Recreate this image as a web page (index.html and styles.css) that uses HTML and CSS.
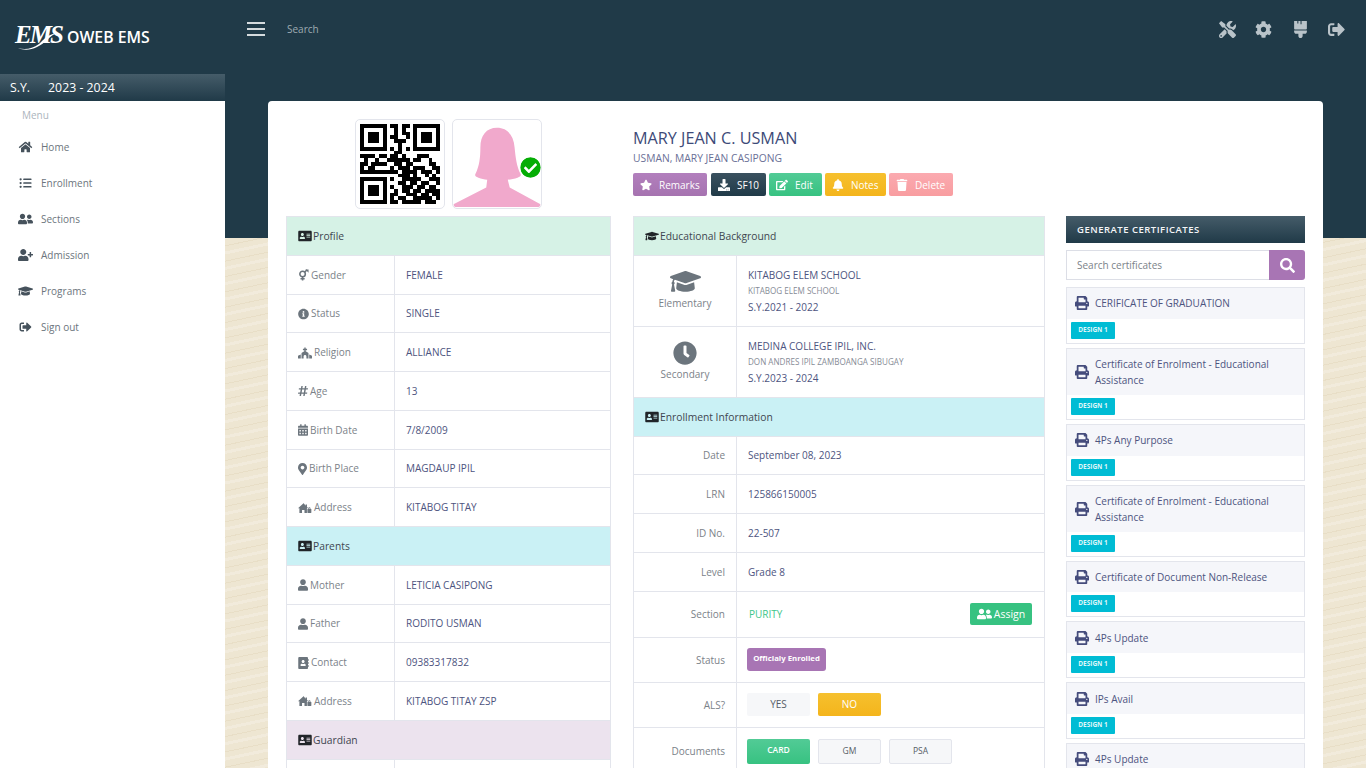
FILE: index.html
```html
<!DOCTYPE html>
<html lang="en">
<head>
  <meta charset="UTF-8">
  <meta name="viewport" content="width=device-width, initial-scale=1.0">
  <title>OWEB EMS</title>
  <link rel="stylesheet" href="styles.css">
</head>
<body>
  <svg class="sprite" xmlns="http://www.w3.org/2000/svg">
    <symbol id="i-home" viewBox="0 0 576 512"><path d="M280.37 148.26L96 300.11V464a16 16 0 0 0 16 16l112.06-.29a16 16 0 0 0 15.92-16V368a16 16 0 0 1 16-16h64a16 16 0 0 1 16 16v95.64a16 16 0 0 0 16 16.05L464 480a16 16 0 0 0 16-16V300L295.67 148.26a12.19 12.19 0 0 0-15.3 0zM571.6 251.47L488 182.56V44.05a12 12 0 0 0-12-12h-56a12 12 0 0 0-12 12v72.61L318.47 43a48 48 0 0 0-61 0L4.34 251.47a12 12 0 0 0-1.6 16.9l25.5 31A12 12 0 0 0 45.15 301l235.22-193.74a12.19 12.19 0 0 1 15.3 0L530.9 301a12 12 0 0 0 16.9-1.6l25.5-31a12 12 0 0 0-1.7-16.93z"/></symbol>
    <symbol id="i-list" viewBox="0 0 512 512"><path d="M48 48a48 48 0 1 0 48 48 48 48 0 0 0-48-48zm0 160a48 48 0 1 0 48 48 48 48 0 0 0-48-48zm0 160a48 48 0 1 0 48 48 48 48 0 0 0-48-48zm448 16H176a16 16 0 0 0-16 16v32a16 16 0 0 0 16 16h320a16 16 0 0 0 16-16v-32a16 16 0 0 0-16-16zm0-320H176a16 16 0 0 0-16 16v32a16 16 0 0 0 16 16h320a16 16 0 0 0 16-16V80a16 16 0 0 0-16-16zm0 160H176a16 16 0 0 0-16 16v32a16 16 0 0 0 16 16h320a16 16 0 0 0 16-16v-32a16 16 0 0 0-16-16z"/></symbol>
    <symbol id="i-friends" viewBox="0 0 640 512"><path d="M192 256c61.9 0 112-50.1 112-112S253.9 32 192 32 80 82.1 80 144s50.1 112 112 112zm76.8 32h-8.3c-20.8 10-43.9 16-68.5 16s-47.6-6-68.5-16h-8.3C51.6 288 0 339.6 0 403.2V432c0 26.5 21.5 48 48 48h288c26.5 0 48-21.5 48-48v-28.8c0-63.6-51.6-115.2-115.2-115.2zM480 256c53 0 96-43 96-96s-43-96-96-96-96 43-96 96 43 96 96 96zm48 32h-3.8c-13.9 4.8-28.6 8-44.2 8s-30.3-3.2-44.2-8H432c-20.4 0-39.2 5.9-55.7 15.4 24.4 26.3 39.7 61.2 39.7 99.8v38.4c0 2.2-.5 4.3-.6 6.4H592c26.5 0 48-21.5 48-48 0-61.9-50.1-112-112-112z"/></symbol>
    <symbol id="i-user-plus" viewBox="0 0 640 512"><path d="M624 208h-64v-64c0-8.8-7.2-16-16-16h-32c-8.8 0-16 7.2-16 16v64h-64c-8.8 0-16 7.2-16 16v32c0 8.8 7.2 16 16 16h64v64c0 8.8 7.2 16 16 16h32c8.8 0 16-7.2 16-16v-64h64c8.8 0 16-7.2 16-16v-32c0-8.8-7.2-16-16-16zm-400 48c70.7 0 128-57.3 128-128S294.7 0 224 0 96 57.3 96 128s57.3 128 128 128zm89.6 32h-16.7c-22.2 10.2-46.9 16-72.9 16s-50.6-5.8-72.9-16h-16.7C60.2 288 0 348.2 0 422.4V464c0 26.5 21.5 48 48 48h352c26.5 0 48-21.5 48-48v-41.6c0-74.2-60.2-134.4-134.4-134.4z"/></symbol>
    <symbol id="i-cap" viewBox="0 0 640 512"><path d="M622.34 153.2L343.4 67.5c-15.2-4.67-31.6-4.67-46.79 0L17.66 153.2c-23.54 7.23-23.54 38.36 0 45.59l48.63 14.94c-10.67 13.19-17.23 29.28-17.88 46.9C38.78 266.15 32 276.11 32 288c0 10.78 5.68 19.85 13.86 25.65L20.33 428.53C18.11 438.52 25.71 448 35.94 448h56.11c10.24 0 17.84-9.48 15.62-19.47L82.14 313.65C90.32 307.85 96 298.78 96 288c0-11.57-6.47-21.25-15.66-26.87.76-15.02 8.44-28.3 20.69-36.72L296.6 284.5c9.06 2.78 26.44 6.25 46.79 0l278.95-85.7c23.55-7.24 23.55-38.36 0-45.6zM352.79 315.09c-28.53 8.76-52.84 3.92-65.59 0l-145.02-44.55L128 384c0 35.35 85.96 64 192 64s192-28.65 192-64l-14.18-113.47-145.03 44.56z"/></symbol>
    <symbol id="i-cap-tall" viewBox="0 62 640 390" preserveAspectRatio="none"><path d="M622.34 153.2L343.4 67.5c-15.2-4.67-31.6-4.67-46.79 0L17.66 153.2c-23.54 7.23-23.54 38.36 0 45.59l48.63 14.94c-10.67 13.19-17.23 29.28-17.88 46.9C38.78 266.15 32 276.11 32 288c0 10.78 5.68 19.85 13.86 25.65L20.33 428.53C18.11 438.52 25.71 448 35.94 448h56.11c10.24 0 17.84-9.48 15.62-19.47L82.14 313.65C90.32 307.85 96 298.78 96 288c0-11.57-6.47-21.25-15.66-26.87.76-15.02 8.44-28.3 20.69-36.72L296.6 284.5c9.06 2.78 26.44 6.25 46.79 0l278.95-85.7c23.55-7.24 23.55-38.36 0-45.6zM352.79 315.09c-28.53 8.76-52.84 3.92-65.59 0l-145.02-44.55L128 384c0 35.35 85.96 64 192 64s192-28.65 192-64l-14.18-113.47-145.03 44.56z"/></symbol>
    <symbol id="i-signout" viewBox="0 0 512 512"><path d="M497 273L329 441c-15 15-41 4.5-41-17v-96H152c-13.3 0-24-10.7-24-24v-96c0-13.3 10.7-24 24-24h136V88c0-21.4 25.9-32 41-17l168 168c9.3 9.4 9.3 24.6 0 34zM192 436v-40c0-6.6-5.4-12-12-12H96c-17.7 0-32-14.3-32-32V160c0-17.7 14.3-32 32-32h84c6.6 0 12-5.4 12-12V76c0-6.6-5.4-12-12-12H96c-53 0-96 43-96 96v192c0 53 43 96 96 96h84c6.6 0 12-5.4 12-12z"/></symbol>
    <symbol id="i-tools" viewBox="0 0 512 512"><path d="M501.1 395.7L384 278.6c-23.1-23.1-57.6-27.6-85.4-13.9L192 158.1V96L64 0 0 64l96 128h62.1l106.6 106.6c-13.6 27.8-9.2 62.3 13.9 85.4l117.1 117.1c14.6 14.6 38.2 14.6 52.7 0l52.7-52.7c14.5-14.6 14.5-38.2 0-52.7zM331.7 225c28.3 0 54.9 11 74.9 31l19.4 19.4c15.8-6.9 30.8-16.5 43.8-29.5 37.1-37.1 49.7-89.3 37.9-136.7-2.2-9-13.5-12.1-20.1-5.5l-74.4 74.4-67.9-11.3L334 98.9l74.4-74.4c6.6-6.6 3.4-17.9-5.7-20.2-47.4-11.7-99.6.9-136.6 37.9-28.5 28.5-41.9 66.1-41.2 103.6l82.1 82.1c8.1-1.9 16.5-2.9 24.7-2.9zm-103.9 82l-56.7-56.7L18.7 402.8c-25 25-25 65.5 0 90.5s65.5 25 90.5 0l123.6-123.6c-7.6-19.9-9.9-41.6-5-62.7zM64 472c-13.2 0-24-10.8-24-24 0-13.3 10.7-24 24-24s24 10.7 24 24c0 13.2-10.7 24-24 24z"/></symbol>
    <symbol id="i-cog" viewBox="0 0 512 512"><path d="M487.4 315.7l-42.6-24.6c4.3-23.2 4.3-47 0-70.2l42.6-24.6c4.9-2.8 7.1-8.6 5.5-14-11.1-35.6-30-67.8-54.7-94.6-3.8-4.1-10-5.1-14.8-2.3L380.8 110c-17.9-15.4-38.5-27.3-60.8-35.1V25.8c0-5.6-3.9-10.5-9.4-11.7-36.7-8.2-74.3-7.8-109.2 0-5.5 1.2-9.4 6.1-9.4 11.7V75c-22.2 7.9-42.8 19.8-60.8 35.1L88.7 85.5c-4.9-2.8-11-1.9-14.8 2.3-24.7 26.7-43.6 58.9-54.7 94.6-1.7 5.4.6 11.2 5.5 14L67.3 221c-4.3 23.2-4.3 47 0 70.2l-42.6 24.6c-4.9 2.8-7.1 8.6-5.5 14 11.1 35.6 30 67.8 54.7 94.6 3.8 4.1 10 5.1 14.8 2.3l42.6-24.6c17.9 15.4 38.5 27.3 60.8 35.1v49.2c0 5.6 3.9 10.5 9.4 11.7 36.7 8.2 74.3 7.8 109.2 0 5.5-1.2 9.4-6.1 9.4-11.7v-49.2c22.2-7.9 42.8-19.8 60.8-35.1l42.6 24.6c4.9 2.8 11 1.9 14.8-2.3 24.7-26.7 43.6-58.9 54.7-94.6 1.5-5.5-.7-11.3-5.6-14.1zM256 336c-44.1 0-80-35.9-80-80s35.9-80 80-80 80 35.9 80 80-35.9 80-80 80z"/></symbol>
    <symbol id="i-brush" viewBox="0 0 384 512"><path d="M0 0h96v72h32V0h64v96h32V0h160v224c0 18-14 32-32 32H32C14 256 0 242 0 224zM0 288h384v32c0 35-29 64-64 64h-64v64c0 35-29 64-64 64s-64-29-64-64v-64H64c-35 0-64-29-64-64z"/></symbol>
    <symbol id="i-idcard" viewBox="0 0 576 512"><path d="M528 32H48C21.5 32 0 53.5 0 80v352c0 26.5 21.5 48 48 48h480c26.5 0 48-21.5 48-48V80c0-26.5-21.5-48-48-48zm-352 96c35.3 0 64 28.7 64 64s-28.7 64-64 64-64-28.7-64-64 28.7-64 64-64zm112 236.8c0 10.6-10 19.2-22.4 19.2H86.4C74 384 64 375.4 64 364.8v-19.2c0-31.8 30.1-57.6 67.2-57.6h5c12.3 5.1 25.7 8 39.8 8s27.6-2.9 39.8-8h5c37.1 0 67.2 25.8 67.2 57.6v19.2zM512 312c0 4.4-3.6 8-8 8H360c-4.4 0-8-3.6-8-8v-16c0-4.4 3.6-8 8-8h144c4.4 0 8 3.6 8 8v16zm0-64c0 4.4-3.6 8-8 8H360c-4.4 0-8-3.6-8-8v-16c0-4.4 3.6-8 8-8h144c4.4 0 8 3.6 8 8v16zm0-64c0 4.4-3.6 8-8 8H360c-4.4 0-8-3.6-8-8v-16c0-4.4 3.6-8 8-8h144c4.4 0 8 3.6 8 8v16z"/></symbol>
    <symbol id="i-gender" viewBox="0 0 24 24"><g fill="none" stroke="currentColor" stroke-width="3.4"><circle cx="10" cy="10" r="6"/><path d="M10 16v8M5.5 20h9M14.5 5.5L20 1"/></g><path d="M16 0h7v7z"/></symbol>
    <symbol id="i-info" viewBox="0 0 512 512"><path d="M256 8C119.043 8 8 119.083 8 256c0 136.997 111.043 248 248 248s248-111.003 248-248C504 119.083 392.957 8 256 8zm0 110c23.196 0 42 18.804 42 42s-18.804 42-42 42-42-18.804-42-42 18.804-42 42-42zm56 254c0 6.627-5.373 12-12 12h-88c-6.627 0-12-5.373-12-12v-24c0-6.627 5.373-12 12-12h12v-64h-12c-6.627 0-12-5.373-12-12v-24c0-6.627 5.373-12 12-12h64c6.627 0 12 5.373 12 12v100h12c6.627 0 12 5.373 12 12v24z"/></symbol>
    <symbol id="i-church" viewBox="0 0 640 512"><path d="M464.46 246.68L352 179.2V128h48c8.84 0 16-7.16 16-16V80c0-8.84-7.16-16-16-16h-48V16c0-8.84-7.16-16-16-16h-32c-8.84 0-16 7.16-16 16v48h-48c-8.84 0-16 7.16-16 16v32c0 8.84 7.16 16 16 16h48v51.2l-112.46 67.48A31.997 31.997 0 0 0 160 274.12V512h96v-96c0-35.35 28.65-64 64-64s64 28.65 64 64v96h96V274.12c0-11.24-5.9-21.66-15.54-27.44zM0 395.96V496c0 8.84 7.16 16 16 16h112V320L19.39 366.52A32.024 32.024 0 0 0 0 395.96zm620.61-29.44L512 320v192h112c8.84 0 16-7.16 16-16V395.96c0-12.8-7.63-24.37-19.39-29.44z"/></symbol>
    <symbol id="i-hash" viewBox="0 0 448 512"><path d="M440.667 182.109l7.143-40c1.313-7.355-4.342-14.109-11.813-14.109h-74.81l14.623-81.891C377.123 38.754 371.468 32 363.997 32h-40.632a12 12 0 0 0-11.813 9.891L296.175 128H197.54l14.623-81.891C213.477 38.754 207.822 32 200.35 32h-40.632a12 12 0 0 0-11.813 9.891L132.528 128H53.432a12 12 0 0 0-11.813 9.891l-7.143 40C33.163 185.246 38.818 192 46.289 192h74.81L98.242 320H19.146a12 12 0 0 0-11.813 9.891l-7.143 40C-1.123 377.246 4.532 384 12.003 384h74.81L72.19 465.891C70.877 473.246 76.532 480 84.003 480h40.632a12 12 0 0 0 11.813-9.891L151.826 384h98.634l-14.623 81.891C234.523 473.246 240.178 480 247.65 480h40.632a12 12 0 0 0 11.813-9.891L315.472 384h79.096a12 12 0 0 0 11.813-9.891l7.143-40c1.313-7.355-4.342-14.109-11.813-14.109h-74.81l22.857-128h79.096a12 12 0 0 0 11.813-9.891zM261.889 320h-98.634l22.857-128h98.634l-22.857 128z"/></symbol>
    <symbol id="i-cal" viewBox="0 0 448 512"><path d="M0 464c0 26.5 21.5 48 48 48h352c26.5 0 48-21.5 48-48V192H0v272zm320-196c0-6.6 5.4-12 12-12h40c6.6 0 12 5.4 12 12v40c0 6.6-5.4 12-12 12h-40c-6.6 0-12-5.4-12-12v-40zm0 128c0-6.6 5.4-12 12-12h40c6.6 0 12 5.4 12 12v40c0 6.6-5.4 12-12 12h-40c-6.6 0-12-5.4-12-12v-40zM192 268c0-6.6 5.4-12 12-12h40c6.6 0 12 5.4 12 12v40c0 6.6-5.4 12-12 12h-40c-6.6 0-12-5.4-12-12v-40zm0 128c0-6.6 5.4-12 12-12h40c6.6 0 12 5.4 12 12v40c0 6.6-5.4 12-12 12h-40c-6.6 0-12-5.4-12-12v-40zM64 268c0-6.6 5.4-12 12-12h40c6.6 0 12 5.4 12 12v40c0 6.6-5.4 12-12 12H76c-6.6 0-12-5.4-12-12v-40zm0 128c0-6.6 5.4-12 12-12h40c6.6 0 12 5.4 12 12v40c0 6.6-5.4 12-12 12H76c-6.6 0-12-5.4-12-12v-40zM400 64h-48V16c0-8.8-7.2-16-16-16h-32c-8.8 0-16 7.2-16 16v48H160V16c0-8.8-7.2-16-16-16h-32c-8.8 0-16 7.2-16 16v48H48C21.5 64 0 85.5 0 112v48h448v-48c0-26.5-21.5-48-48-48z"/></symbol>
    <symbol id="i-marker" viewBox="0 0 384 512"><path d="M172.268 501.67C26.97 291.031 0 269.413 0 192 0 85.961 85.961 0 192 0s192 85.961 192 192c0 77.413-26.97 99.031-172.268 309.67-9.535 13.774-29.93 13.773-39.464 0zM192 272c44.183 0 80-35.817 80-80s-35.817-80-80-80-80 35.817-80 80 35.817 80 80 80z"/></symbol>
    <symbol id="i-house" viewBox="0 0 640 512"><path d="M240 48L0 264h64v216h120V352h112v128h112V264h32v-40L410 212V96h-64v56L270 48c-9-8-21-8-30 0zM470 300v-24a50 50 0 0 1 100 0v24h24c9 0 16 7 16 16v148c0 9-7 16-16 16H446c-9 0-16-7-16-16V316c0-9 7-16 16-16zm34 0h32v-24a16 16 0 0 0-32 0z"/></symbol>
    <symbol id="i-user" viewBox="0 0 448 512"><path d="M224 256c70.7 0 128-57.3 128-128S294.7 0 224 0 96 57.3 96 128s57.3 128 128 128zm89.6 32h-16.7c-22.2 10.2-46.9 16-72.9 16s-50.6-5.8-72.9-16h-16.7C60.2 288 0 348.2 0 422.4V464c0 26.5 21.5 48 48 48h352c26.5 0 48-21.5 48-48v-41.6c0-74.2-60.2-134.4-134.4-134.4z"/></symbol>
    <symbol id="i-book" viewBox="0 0 448 512"><path d="M436 160c6.6 0 12-5.4 12-12v-40c0-6.6-5.4-12-12-12h-20V48c0-26.5-21.5-48-48-48H48C21.5 0 0 21.5 0 48v416c0 26.5 21.5 48 48 48h320c26.5 0 48-21.5 48-48v-48h20c6.6 0 12-5.4 12-12v-40c0-6.6-5.4-12-12-12h-20v-64h20c6.6 0 12-5.4 12-12v-40c0-6.6-5.4-12-12-12h-20v-64h20zm-228-32c35.3 0 64 28.7 64 64s-28.7 64-64 64-64-28.7-64-64 28.7-64 64-64zm112 236.8c0 10.6-10 19.2-22.4 19.2H118.4C106 384 96 375.4 96 364.8v-19.2c0-31.8 30.1-57.6 67.2-57.6h5c12.3 5.1 25.7 8 39.8 8s27.6-2.9 39.8-8h5c37.1 0 67.2 25.8 67.2 57.6v19.2z"/></symbol>
    <symbol id="i-clock" viewBox="0 0 512 512"><path d="M256,8C119,8,8,119,8,256S119,504,256,504,504,393,504,256,393,8,256,8Zm92.49,313h0l-20,25a16,16,0,0,1-22.49,2.5h0l-67-49.72a40,40,0,0,1-15-31.23V112a16,16,0,0,1,16-16h32a16,16,0,0,1,16,16V256l58,42.5A16,16,0,0,1,348.49,321Z"/></symbol>
    <symbol id="i-star" viewBox="0 0 576 512"><path d="M259.3 17.8L194 150.2 47.9 171.5c-26.2 3.8-36.7 36.1-17.7 54.6l105.7 103-25 145.5c-4.5 26.3 23.2 46 46.4 33.7L288 439.6l130.7 68.7c23.2 12.2 50.9-7.4 46.4-33.7l-25-145.5 105.7-103c19-18.5 8.5-50.8-17.7-54.6L382 150.2 316.7 17.8c-11.7-23.6-45.6-23.9-57.4 0z"/></symbol>
    <symbol id="i-download" viewBox="0 0 512 512"><path d="M216 0h80c13.3 0 24 10.7 24 24v168h87.7c17.8 0 26.7 21.5 14.1 34.1L269.7 378.3c-7.5 7.5-19.8 7.5-27.3 0L90.1 226.1c-12.6-12.6-3.7-34.1 14.1-34.1H192V24c0-13.3 10.7-24 24-24zm296 376v112c0 13.3-10.7 24-24 24H24c-13.3 0-24-10.7-24-24V376c0-13.3 10.7-24 24-24h146.7l49 49c20.1 20.1 52.5 20.1 72.6 0l49-49H488c13.3 0 24 10.7 24 24zm-124 88c0-11-9-20-20-20s-20 9-20 20 9 20 20 20 20-9 20-20zm64 0c0-11-9-20-20-20s-20 9-20 20 9 20 20 20 20-9 20-20z"/></symbol>
    <symbol id="i-edit" viewBox="0 0 576 512"><path d="M402.6 83.2l90.2 90.2c3.8 3.8 3.8 10 0 13.8L274.4 405.6l-92.8 10.3c-12.4 1.4-22.9-9.1-21.5-21.5l10.3-92.8L388.8 83.2c3.8-3.8 10-3.8 13.8 0zm162-22.9l-48.8-48.8c-15.2-15.2-39.9-15.2-55.2 0l-35.4 35.4c-3.8 3.8-3.8 10 0 13.8l90.2 90.2c3.8 3.8 10 3.8 13.8 0l35.4-35.4c15.2-15.3 15.2-40 0-55.2zM384 346.2V448H64V128h229.8c3.2 0 6.2-1.3 8.5-3.5l40-40c7.6-7.6 2.2-20.5-8.5-20.5H48C21.5 64 0 85.5 0 112v352c0 26.5 21.5 48 48 48h352c26.5 0 48-21.5 48-48V306.2c0-10.7-12.9-16-20.5-8.5l-40 40c-2.2 2.3-3.5 5.3-3.5 8.5z"/></symbol>
    <symbol id="i-bell" viewBox="0 0 448 512"><path d="M224 512c35.32 0 63.97-28.65 63.97-64H160.03c0 35.35 28.65 64 63.97 64zm215.39-149.71c-19.32-20.76-55.47-51.99-55.47-154.29 0-77.7-54.48-139.9-127.94-155.16V32c0-17.67-14.32-32-31.98-32s-31.98 14.33-31.98 32v20.84C118.56 68.1 64.08 130.3 64.08 208c0 102.3-36.15 133.53-55.47 154.29-6 6.45-8.66 14.16-8.61 21.71.11 16.4 12.98 32 32.1 32h383.8c19.12 0 32-15.6 32.1-32 .05-7.55-2.61-15.27-8.61-21.71z"/></symbol>
    <symbol id="i-trash" viewBox="0 0 448 512"><path d="M432 32H312l-9.4-18.7A24 24 0 0 0 281.1 0H166.8a23.72 23.72 0 0 0-21.4 13.3L136 32H16A16 16 0 0 0 0 48v32a16 16 0 0 0 16 16h416a16 16 0 0 0 16-16V48a16 16 0 0 0-16-16zM53.2 467a48 48 0 0 0 47.9 45h245.8a48 48 0 0 0 47.9-45L416 128H32z"/></symbol>
    <symbol id="i-print" viewBox="0 0 512 512"><path d="M448 192V77.25c0-8.49-3.37-16.62-9.37-22.63L393.37 9.37c-6-6-14.14-9.37-22.63-9.37H96C78.33 0 64 14.33 64 32v160c-35.35 0-64 28.65-64 64v112c0 8.84 7.16 16 16 16h48v96c0 17.67 14.33 32 32 32h320c17.67 0 32-14.33 32-32v-96h48c8.84 0 16-7.16 16-16V256c0-35.35-28.65-64-64-64zm-64 256H128v-96h256v96zm0-224H128V64h192v48c0 8.84 7.16 16 16 16h48v96zm48 72c-13.25 0-24-10.75-24-24 0-13.26 10.75-24 24-24s24 10.74 24 24c0 13.25-10.75 24-24 24z"/></symbol>
    <symbol id="i-search" viewBox="0 0 512 512"><path d="M505 442.7L405.3 343c-4.5-4.5-10.6-7-17-7H372c27.6-35.3 44-79.7 44-128C416 93.1 322.9 0 208 0S0 93.1 0 208s93.1 208 208 208c48.3 0 92.7-16.4 128-44v16.3c0 6.4 2.5 12.5 7 17l99.7 99.7c9.4 9.4 24.6 9.4 33.9 0l28.3-28.3c9.4-9.4 9.4-24.6.1-34zM208 336c-70.7 0-128-57.2-128-128 0-70.7 57.2-128 128-128 70.7 0 128 57.2 128 128 0 70.7-57.2 128-128 128z"/></symbol>
    <symbol id="i-check" viewBox="0 0 512 512"><path d="M504 256c0 136.967-111.033 248-248 248S8 392.967 8 256 119.033 8 256 8s248 111.033 248 248zM227.314 387.314l184-184c6.248-6.248 6.248-16.379 0-22.627l-22.627-22.627c-6.248-6.249-16.379-6.249-22.628 0L216 308.118l-70.059-70.059c-6.248-6.248-16.379-6.248-22.628 0l-22.627 22.627c-6.248 6.248-6.248 16.379 0 22.627l104 104c6.249 6.249 16.379 6.249 22.628.001z"/></symbol>
  </svg>

  <aside class="sidebar">
    <div class="brand">
      <span class="logo">
        <span class="logo-text">EMS</span>
        <svg class="logo-swoosh" viewBox="0 0 44 30"><path d="M3 25c9 4 20 1 30-9 3-3 6-5 9-6-8 1-13 6-18 11-7 5-14 6-21 4z"/></svg>
      </span>
      <span class="brand-name">OWEB EMS</span>
    </div>
    <div class="sy"><span>S.Y.</span><span>2023 - 2024</span></div>
    <nav class="menu">
      <div class="menu-title">Menu</div>
      <a class="menu-item"><svg class="ic"><use href="#i-home"/></svg>Home</a>
      <a class="menu-item"><svg class="ic"><use href="#i-list"/></svg>Enrollment</a>
      <a class="menu-item"><svg class="ic"><use href="#i-friends"/></svg>Sections</a>
      <a class="menu-item"><svg class="ic"><use href="#i-user-plus"/></svg>Admission</a>
      <a class="menu-item"><svg class="ic"><use href="#i-cap"/></svg>Programs</a>
      <a class="menu-item"><svg class="ic"><use href="#i-signout"/></svg>Sign out</a>
    </nav>
  </aside>

  <main class="main">
    <header class="topbar">
      <button class="burger"><i></i><i></i><i></i></button>
      <span class="top-search">Search</span>
      <div class="top-icons">
        <svg class="ic"><use href="#i-tools"/></svg>
        <svg class="ic"><use href="#i-cog"/></svg>
        <svg class="ic"><use href="#i-brush"/></svg>
        <svg class="ic"><use href="#i-signout"/></svg>
      </div>
    </header>

    <section class="card">
      <div class="layout hero">
        <div class="hero-pics">
          <div class="pic">
            <svg class="qr" viewBox="0 0 21 21" shape-rendering="crispEdges">
              <path fill-rule="evenodd" d="M0 0h7v7h-7zM1 1v5h5v-5zM2 2h3v3h-3zM14 0h7v7h-7zM15 1v5h5v-5zM16 2h3v3h-3zM0 14h7v7h-7zM1 15v5h5v-5zM2 16h3v3h-3z"/>
              <path fill="none" stroke="#000" d="M8 .5h2M11 .5h2M9 1.500h1M11 1.500h1M9 2.500h1M11 2.500h2M8 3.500h2M12 3.500h1M9 4.500h3M10 5.500h1M8 6.500h1M10 6.500h1M12 6.500h1M9 7.500h2M0 8.500h4M5 8.500h2M8 8.500h2M11 8.500h1M15 8.500h3M1 9.500h1M4 9.500h1M7 9.500h6M14 9.500h2M18 9.500h1M0 10.500h2M3 10.500h4M9 10.500h2M12 10.500h2M18 10.500h2M0 11.500h1M2 11.500h2M8 11.500h1M10 11.500h3M14 11.500h3M19 11.500h2M0 12.500h10M11 12.500h4M16 12.500h3M20 12.500h1M10 13.500h3M14 13.500h1M17 13.500h1M19 13.500h1M8 14.500h1M11 14.500h5M18 14.500h3M10 15.500h2M13 15.500h2M16 15.500h2M20 15.500h1M8 16.500h1M11 16.500h3M15 16.500h2M18 16.500h2M9 17.500h1M11 17.500h2M14 17.500h2M17 17.500h4M8 18.500h2M12 18.500h3M16 18.500h2M19 18.500h2M8 19.500h1M10 19.500h2M14 19.500h5M20 19.500h1M8 20.500h2M11 20.500h5M17 20.500h3"/>
            </svg>
          </div>
          <div class="pic pic-photo">
            <svg class="avatar" viewBox="0 0 90 90"><path d="M45 8c-11 0-17 8-17 20 0 10-1 19-5 27-1 2 0 3 3 4 3 1 6 2 9 2l-1 8L1 86c-1 1 0 3 3 3h82c3 0 4-2 3-3L58 69l-2-8c3 0 7-1 10-2 3-1 4-2 3-4-4-8-5-17-6-27C62 16 56 8 45 8z"/></svg>
            <svg class="verified"><use href="#i-check"/></svg>
          </div>
        </div>
        <div class="hero-info">
          <h1 class="student-name">MARY JEAN C. USMAN</h1>
          <p class="student-full">USMAN, MARY JEAN CASIPONG</p>
          <div class="actions">
            <button class="btn btn-purple"><svg class="ic"><use href="#i-star"/></svg>Remarks</button>
            <button class="btn btn-dark"><svg class="ic"><use href="#i-download"/></svg>SF10</button>
            <button class="btn btn-green"><svg class="ic"><use href="#i-edit"/></svg>Edit</button>
            <button class="btn btn-yellow"><svg class="ic"><use href="#i-bell"/></svg>Notes</button>
            <button class="btn btn-red"><svg class="ic"><use href="#i-trash"/></svg>Delete</button>
          </div>
        </div>
      </div>

      <div class="layout">
        <table class="info info-left">
          <colgroup><col class="col-left"><col></colgroup>
          <tr class="head mint"><th colspan="2"><svg class="ic"><use href="#i-idcard"/></svg>Profile</th></tr>
          <tr><td class="lbl"><svg class="ic ic-11"><use href="#i-gender"/></svg>Gender</td><td class="val">FEMALE</td></tr>
          <tr><td class="lbl"><svg class="ic ic-11"><use href="#i-info"/></svg>Status</td><td class="val">SINGLE</td></tr>
          <tr><td class="lbl"><svg class="ic ic-14"><use href="#i-church"/></svg>Religion</td><td class="val">ALLIANCE</td></tr>
          <tr><td class="lbl"><svg class="ic ic-10"><use href="#i-hash"/></svg>Age</td><td class="val">13</td></tr>
          <tr><td class="lbl"><svg class="ic ic-10"><use href="#i-cal"/></svg>Birth Date</td><td class="val">7/8/2009</td></tr>
          <tr><td class="lbl"><svg class="ic ic-9"><use href="#i-marker"/></svg>Birth Place</td><td class="val">MAGDAUP IPIL</td></tr>
          <tr><td class="lbl"><svg class="ic ic-14"><use href="#i-house"/></svg>Address</td><td class="val">KITABOG TITAY</td></tr>
          <tr class="head cyan"><th colspan="2"><svg class="ic"><use href="#i-idcard"/></svg>Parents</th></tr>
          <tr><td class="lbl"><svg class="ic ic-10"><use href="#i-user"/></svg>Mother</td><td class="val">LETICIA CASIPONG</td></tr>
          <tr><td class="lbl"><svg class="ic ic-10"><use href="#i-user"/></svg>Father</td><td class="val">RODITO USMAN</td></tr>
          <tr><td class="lbl"><svg class="ic ic-11"><use href="#i-book"/></svg>Contact</td><td class="val">09383317832</td></tr>
          <tr><td class="lbl"><svg class="ic ic-14"><use href="#i-house"/></svg>Address</td><td class="val">KITABOG TITAY ZSP</td></tr>
          <tr class="head lilac"><th colspan="2"><svg class="ic"><use href="#i-idcard"/></svg>Guardian</th></tr>
          <tr><td class="lbl"></td><td class="val"></td></tr>
        </table>

        <table class="info info-mid">
          <colgroup><col class="col-mid"><col></colgroup>
          <tr class="head mint"><th colspan="2"><svg class="ic"><use href="#i-cap"/></svg>Educational Background</th></tr>
          <tr class="school">
            <td class="level"><svg class="ic ic-cap"><use href="#i-cap-tall"/></svg><span>Elementary</span></td>
            <td class="val"><b>KITABOG ELEM SCHOOL</b><small>KITABOG ELEM SCHOOL</small><span>S.Y.2021 - 2022</span></td>
          </tr>
          <tr class="school">
            <td class="level"><svg class="ic"><use href="#i-clock"/></svg><span>Secondary</span></td>
            <td class="val"><b>MEDINA COLLEGE IPIL, INC.</b><small>DON ANDRES IPIL ZAMBOANGA SIBUGAY</small><span>S.Y.2023 - 2024</span></td>
          </tr>
          <tr class="head cyan"><th colspan="2"><svg class="ic"><use href="#i-idcard"/></svg>Enrollment Information</th></tr>
          <tr><td class="lbl right">Date</td><td class="val">September 08, 2023</td></tr>
          <tr><td class="lbl right">LRN</td><td class="val">125866150005</td></tr>
          <tr><td class="lbl right">ID No.</td><td class="val">22-507</td></tr>
          <tr><td class="lbl right">Level</td><td class="val">Grade 8</td></tr>
          <tr class="row-section">
            <td class="lbl right">Section</td>
            <td class="val">
              <div class="section-cell">
                <span class="purity">PURITY</span>
                <button class="btn-assign"><svg class="ic"><use href="#i-friends"/></svg>Assign</button>
              </div>
            </td>
          </tr>
          <tr class="row-status"><td class="lbl right">Status</td><td class="val"><span class="status-pill">Officialy Enrolled</span></td></tr>
          <tr class="row-als">
            <td class="lbl right">ALS?</td>
            <td class="val"><div class="choices"><span class="choice">YES</span><span class="choice choice-on">NO</span></div></td>
          </tr>
          <tr class="row-docs">
            <td class="lbl right">Documents</td>
            <td class="val"><div class="choices docs"><span class="doc doc-on">CARD</span><span class="doc">GM</span><span class="doc">PSA</span></div></td>
          </tr>
        </table>

        <div class="certs">
          <h2 class="certs-title">GENERATE CERTIFICATES</h2>
          <div class="certs-search">
            <span class="certs-input">Search certificates</span>
            <button class="certs-go"><svg class="ic"><use href="#i-search"/></svg></button>
          </div>
          <div class="cert"><div class="cert-name"><svg class="ic"><use href="#i-print"/></svg><span>CERIFICATE OF GRADUATION</span></div><div class="cert-foot"><span class="design">DESIGN 1</span></div></div>
          <div class="cert"><div class="cert-name"><svg class="ic"><use href="#i-print"/></svg><span>Certificate of Enrolment - Educational Assistance</span></div><div class="cert-foot"><span class="design">DESIGN 1</span></div></div>
          <div class="cert"><div class="cert-name"><svg class="ic"><use href="#i-print"/></svg><span>4Ps Any Purpose</span></div><div class="cert-foot"><span class="design">DESIGN 1</span></div></div>
          <div class="cert"><div class="cert-name"><svg class="ic"><use href="#i-print"/></svg><span>Certificate of Enrolment - Educational Assistance</span></div><div class="cert-foot"><span class="design">DESIGN 1</span></div></div>
          <div class="cert"><div class="cert-name"><svg class="ic"><use href="#i-print"/></svg><span>Certificate of Document Non-Release</span></div><div class="cert-foot"><span class="design">DESIGN 1</span></div></div>
          <div class="cert"><div class="cert-name"><svg class="ic"><use href="#i-print"/></svg><span>4Ps Update</span></div><div class="cert-foot"><span class="design">DESIGN 1</span></div></div>
          <div class="cert"><div class="cert-name"><svg class="ic"><use href="#i-print"/></svg><span>IPs Avail</span></div><div class="cert-foot"><span class="design">DESIGN 1</span></div></div>
          <div class="cert"><div class="cert-name"><svg class="ic"><use href="#i-print"/></svg><span>4Ps Update</span></div><div class="cert-foot"><span class="design">DESIGN 1</span></div></div>
        </div>
      </div>
    </section>
  </main>
</body>
</html>
```

FILE: styles.css
```css
* {
  box-sizing: border-box;
}
html, body {
  height: 100%;
}
body {
  margin: 0;
  display: flex;
  overflow: hidden;
  font-family: "Open Sans", "Noto Sans", Arial, sans-serif;
  font-size: 10px;
  color: #6c757d;
}
.sprite {
  display: none;
}
.ic {
  width: 12px;
  height: 12px;
  fill: currentColor;
  flex: none;
}

/* sidebar */
.sidebar {
  width: 225px;
  flex: none;
  display: flex;
  flex-direction: column;
  background: #fff;
}
.brand {
  height: 74px;
  background: #203a48;
  display: flex;
  align-items: center;
  padding-left: 15px;
  color: #fff;
}
.logo {
  position: relative;
  width: 44px;
  height: 30px;
  margin-right: 8px;
}
.logo-text {
  font-family: "Liberation Serif", serif;
  font-style: italic;
  font-weight: bold;
  font-size: 25px;
  line-height: 26px;
  letter-spacing: -2px;
}
.logo-swoosh {
  position: absolute;
  left: 0;
  top: 1px;
  width: 44px;
  height: 30px;
  fill: #fff;
}
.brand-name {
  font-size: 15.800px;
  font-weight: 600;
}
.sy {
  height: 27px;
  padding-left: 10px;
  display: flex;
  align-items: center;
  gap: 18px;
  color: #fff;
  font-size: 12.300px;
  font-weight: 500;
  background: linear-gradient(#455c69, #203a48);
}
.menu {
  flex: 1;
  padding-top: 7px;
}
.menu-title {
  padding-left: 22px;
  height: 21px;
  line-height: 14px;
  font-size: 10px;
  color: #adb5bd;
}
.menu-item {
  height: 36px;
  padding-left: 18px;
  display: flex;
  align-items: center;
  font-size: 10px;
  color: #6c757d;
}
.menu-item .ic {
  width: 15px;
  height: 12px;
  margin-right: 8px;
  color: #46525c;
}

/* main area */
.main {
  flex: 1;
  min-width: 0;
  background:
    linear-gradient(#203a48 238px, transparent 238px),
    repeating-linear-gradient(168deg, rgba(190, 165, 115, .12) 0 1px, transparent 1px 6px, rgba(255, 255, 255, .22) 6px 9px, transparent 9px 15px),
    #eee6d2;
}
.topbar {
  height: 58px;
  padding: 0 21px 0 22px;
  display: flex;
  align-items: center;
  color: #b9c3c9;
}
.burger {
  width: 18px;
  height: 14px;
  padding: 0;
  border: 0;
  background: none;
  display: flex;
  flex-direction: column;
  justify-content: space-between;
  margin-right: 22px;
}
.burger i {
  display: block;
  height: 2px;
  background: #d5dbde;
}
.top-search {
  font-size: 10px;
  color: #9fabb2;
}
.top-icons {
  margin-left: auto;
  display: flex;
  gap: 19.300px;
  align-items: center;
}
.top-icons .ic {
  width: 17px;
  height: 17px;
}

.card {
  margin: 43px 43px 0;
  background: #fff;
  border-radius: 4px 4px 0 0;
  padding: 18px 18px 0;
}
.layout {
  display: grid;
  grid-template-columns: 326px 412px 239px;
  column-gap: 21px;
  align-items: start;
}

/* student header */
.hero {
  margin-bottom: 7px;
}
.hero-pics {
  width: 325px;
  display: flex;
  justify-content: center;
  gap: 7px;
}
.pic {
  position: relative;
  width: 90px;
  height: 90px;
  border: 1px solid #e3e5ec;
  border-radius: 5px;
  background: #fff;
  display: flex;
  align-items: center;
  justify-content: center;
  overflow: hidden;
}
.pic-photo {
  align-items: flex-end;
}
.qr {
  width: 80px;
  height: 80px;
}
.avatar {
  width: 88px;
  height: 88px;
  fill: #f1a9cc;
}
.verified {
  position: absolute;
  right: 0;
  top: 37px;
  width: 21px;
  height: 21px;
  fill: #05ad05;
  background: #fff;
  border-radius: 50%;
}
.student-name {
  margin: 8px 0 0;
  font-size: 16.200px;
  font-weight: 400;
  line-height: 22px;
  color: #3d4a78;
}
.student-full {
  margin: 2px 0 0;
  font-size: 10.300px;
  line-height: 15px;
  color: #6a7096;
}
.actions {
  margin-top: 7px;
  display: flex;
  gap: 3px;
}
.btn {
  height: 23px;
  padding: 0 7px;
  border: 0;
  border-radius: 2px;
  display: flex;
  align-items: center;
  gap: 7px;
  color: #fff;
  font: 10px "Open Sans", "Noto Sans", sans-serif;
}
.btn-purple {
  background: linear-gradient(#b27fbd, #a673b0);
  width: 74px;
}
.btn-dark {
  background: linear-gradient(#3a515f, #203a48);
  width: 55px;
  margin-left: 1px;
}
.btn-green {
  background: linear-gradient(#52cb96, #37c281);
  width: 53px;
}
.btn-yellow {
  background: linear-gradient(#f6c02e, #f4b51c);
  width: 61px;
}
.btn-red {
  background: linear-gradient(#fbaab0, #f89da0);
  width: 64px;
}

/* tables */
.info {
  border-collapse: collapse;
  table-layout: fixed;
  width: 100%;
  background: #fff;
}
.info td, .info th {
  border: 1px solid #e3e5ec;
  padding: 0 11px;
  font-weight: 400;
}
.info tr {
  height: 38.750px;
}
.info-left {
  width: 325px;
}
.col-left {
  width: 108px;
}
.col-mid {
  width: 103px;
}
.info th {
  text-align: left;
  color: #3f4650;
  font-size: 10.300px;
}
.info th .ic {
  width: 14px;
  height: 12px;
  margin-right: 1px;
  vertical-align: -2.500px;
  color: #212529;
}
.mint th { background: #d6f2e6; }
.cyan th { background: #caf1f5; }
.lilac th { background: #ece3ee; }
.lbl {
  color: #7b8289;
  white-space: nowrap;
}
.lbl .ic {
  height: 12px;
  margin-right: 2px;
  vertical-align: -2.500px;
  color: #6c757d;
}
.lbl .ic-9 { width: 9px; }
.lbl .ic-10 { width: 10px; }
.lbl .ic-11 { width: 11px; }
.lbl .ic-14 { width: 14px; }
.lbl.right {
  text-align: right;
}
.val {
  color: #4d5480;
}

/* school rows */
.info .school {
  height: 71px;
}
.level {
  text-align: center;
  color: #7b8289;
}
.level .ic {
  display: block;
  width: 24px;
  height: 24px;
  margin: 1px auto 0;
  color: #6c757d;
}
.level .ic-cap {
  width: 31px;
  height: 21px;
  margin: 1px auto 2px;
}
.school .val > * {
  display: block;
}
.school b {
  font-weight: 400;
  line-height: 18px;
}
.school small {
  font-size: 8.100px;
  line-height: 14px;
  color: #868b96;
}
.school span {
  line-height: 18px;
}

.info .row-section { height: 46px; }
.info .row-status { height: 45px; }
.info .row-als { height: 45px; }
.info .row-docs { height: 48px; }
.section-cell {
  display: flex;
  align-items: center;
  justify-content: space-between;
}
.purity {
  margin-left: 1px;
  color: #3cc68a;
}
.btn-assign {
  width: 62px;
  height: 22px;
  margin-right: 1px;
  padding: 0;
  border: 0;
  border-radius: 2px;
  background: #37c281;
  color: #fff;
  font: 10.500px "Open Sans", "Noto Sans", sans-serif;
  display: flex;
  align-items: center;
  justify-content: center;
  gap: 2px;
}
.btn-assign .ic {
  width: 15px;
}
.status-pill {
  display: inline-block;
  width: 79px;
  height: 23px;
  margin-left: -1px;
  line-height: 21px;
  border-radius: 3px;
  background: #a875b4;
  color: #fff;
  font-size: 7.800px;
  font-weight: 700;
  text-align: center;
}
.choices {
  display: flex;
  gap: 8px;
  margin-left: -1px;
}
.choice, .doc {
  width: 63px;
  height: 23px;
  line-height: 23px;
  border-radius: 2px;
  background: #f6f7f9;
  color: #555c66;
  text-align: center;
}
.choice-on {
  background: linear-gradient(#f6c02e, #f4b51c);
  color: #fff;
}
.docs {
  gap: 8px;
}
.doc {
  height: 25px;
  line-height: 22px;
  font-size: 8.500px;
  border: 1px solid #e3e5ec;
}
.doc-on {
  border: 0;
  background: linear-gradient(#52cb96, #37c281);
  color: #fff;
  font-weight: 600;
}

/* certificates */
.certs {
  display: flex;
  flex-direction: column;
  gap: 4px;
}
.certs-title {
  margin: 0 0 3px;
  height: 27px;
  line-height: 27px;
  padding-left: 11px;
  font-size: 9.500px;
  font-weight: 600;
  letter-spacing: .5px;
  color: #f4f6f7;
  background: linear-gradient(#455c69, #203a48);
}
.certs-search {
  height: 30px;
  margin: 0 0 3px;
  display: flex;
}
.certs-input {
  flex: 1;
  padding-left: 10px;
  line-height: 28px;
  border: 1px solid #dcdee6;
  border-right: 0;
  color: #7b8289;
}
.certs-go {
  width: 36px;
  padding: 0;
  border: 0;
  border-radius: 0 3px 3px 0;
  background: #a875b4;
  color: #fff;
  display: flex;
  align-items: center;
  justify-content: center;
}
.certs-go .ic {
  width: 15px;
  height: 15px;
}
.cert {
  border: 1px solid #e3e5ec;
  flex: none;
}
.cert-name {
  background: #f5f6fa;
  display: flex;
  align-items: center;
  gap: 6px;
  padding: 7px 8px;
  min-height: 30.800px;
  color: #4d5480;
  line-height: 16px;
}
.cert-name .ic {
  width: 14px;
  height: 14px;
  color: #454c7c;
}
.cert-foot {
  padding: 3px 4px 4px;
  display: flex;
}
.design {
  width: 44px;
  height: 17px;
  line-height: 16px;
  border-radius: 1px;
  background: #00bcd4;
  color: #dff6f9;
  font-size: 6.500px;
  font-weight: 700;
  text-align: center;
}
```
